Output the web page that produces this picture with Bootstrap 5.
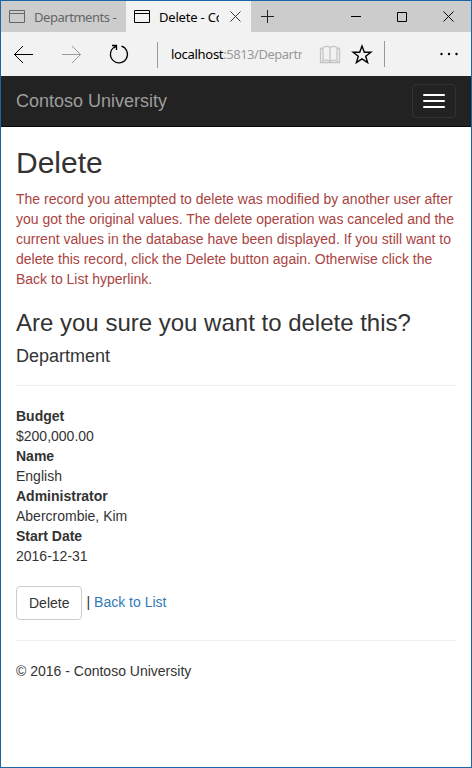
<!DOCTYPE html>
<html lang="en">
<head>
<meta charset="utf-8">
<meta name="viewport" content="width=device-width, initial-scale=1">
<title>Delete - Contoso University</title>
<link href="https://cdn.jsdelivr.net/npm/bootstrap@5.3.0/dist/css/bootstrap.min.css" rel="stylesheet">
<style>
body{font:14px/20px "Liberation Sans",Arial,sans-serif;color:#333;background:#fff}
.window{height:768px;border:1px solid #1b66a2}
.window svg{display:block;flex:none;fill:none;stroke:#000}
.chrome{font-family:"Noto Sans","Open Sans",sans-serif;color:#000}
.tabs-row{height:31px;background:#ccc;font-size:13px}
.tab-idle{width:125px;padding-left:8px;color:#666}
.tab-live{width:125px;padding-left:8px;background:#f2f2f2}
.tab-idle span{margin-left:9px;letter-spacing:-.46px}
.tab-live span{width:60px;margin-left:9px;letter-spacing:-.2px}
.tab-live .tab-x{margin-left:11px}
.window .tab-idle svg{stroke:#666}
.tab-plus{margin-left:10px}
.win-min{margin-right:36px}
.win-max{margin-right:36px}
.win-close{margin-right:17px}
.address-row{height:44px;background:#f2f2f2;font-size:13px}
.divider{width:1px;height:26px;background:#999;margin-top:1px}
.url{width:132px;margin-left:13px;color:#999;letter-spacing:-.48px}
.url b{font-weight:400;color:#000;letter-spacing:-.3px}
.site-nav{height:51px;background:#222;border-bottom:1px solid #080808;padding:0 15px}
.site-nav .navbar-brand{font-size:18px;line-height:20px;color:#9d9d9d;padding:0}
.site-nav .navbar-toggler{width:44px;height:34px;border:1px solid #333;border-radius:4px;padding:0 10px;gap:4px}
.bar{display:block;width:22px;height:2px;border-radius:1px;background:#fff}
.page{padding:19px 15px 0}
h2{font-size:30px;line-height:33px;margin:0 0 10px}
h3{font-size:24px;line-height:27px;margin:20px 0 10px}
h4{font-size:18px;line-height:20px;margin:0 0 -1px}
h2,h3,h4{font-weight:400}
.warn{color:#a94442;margin:0}
hr{margin:20px 0;border-color:#eee;opacity:1}
dl{margin:0 0 20px}
dd{margin:0}
dt,dd{line-height:20px}
.btn-plain{height:34px;border:1px solid #ccc;border-radius:4px;background:#fff;color:#333;font-size:14px;line-height:20px;padding:6px 12px}
.back{color:#337ab7;text-decoration:none}
.sep{margin:0 4px}
.actions span,.actions a{margin-top:-2px}
</style>
<script src="https://cdn.jsdelivr.net/npm/bootstrap@5.3.0/dist/js/bootstrap.bundle.min.js"></script>
</head>
<body>
<div class="window overflow-hidden">
  <div class="chrome">
    <div class="tabs-row d-flex align-items-center">
      <div class="tab-idle h-100 d-flex align-items-center">
        <svg width="16" height="13"><path d="M.5.5h15v12H.5zM.5 3.5h15"/></svg>
        <span class="text-nowrap">Departments -</span>
      </div>
      <div class="tab-live h-100 d-flex align-items-center">
        <svg width="16" height="13"><path d="M.5.5h15v12H.5zM.5 3.5h15"/></svg>
        <span class="text-nowrap overflow-hidden">Delete - Co</span>
        <svg class="tab-x" width="11" height="11"><path stroke="#333" d="M.5.5l10 10M10.500.5l-10 10"/></svg>
      </div>
      <svg class="tab-plus" width="13" height="13"><path stroke="#222" d="M6.500 0v13M0 6.500h13"/></svg>
      <svg class="win-min ms-auto" width="10" height="11"><path d="M0 5.500h10"/></svg>
      <svg class="win-max" width="10" height="10"><path d="M.5.5h9v9h-9z"/></svg>
      <svg class="win-close" width="11" height="11"><path d="M.5.5l10 10M10.500.5l-10 10"/></svg>
    </div>
    <div class="address-row d-flex align-items-center">
      <svg width="156" height="44"><path d="M13 22.500h19M22 14l-8.500 8.500L22 31"/><path stroke="#999" d="M61 22.500h19M71 14l8.500 8.500L71 31"/><path stroke-width="1.300" d="M120.500 14.200a8.500 8.500 0 1 1-6.500.6"/><path d="M111 13.500h4.500V18M115.500 13.500l-2.500 2.500" stroke-width="1.300"/></svg>
      <div class="divider"></div>
      <div class="url text-nowrap overflow-hidden"><b>localhost</b>:5813/Departr</div>
      <svg width="169" height="44"><g stroke="#c4c4c4" stroke-width="1.300"><path d="M28 15.500c-2-1.300-5-1.300-7 0v13.500c2-1 5-1 7 .5 2-1.500 5-1.500 7-.5v-13.500c-2-1.300-5-1.300-7 0zM28 15.500V30M21 16.500h-2.500v14h19v-14H35"/></g><path stroke-width="1.400" d="M60 14l2.300 6.200h6.600l-5.200 4.100 1.900 6.300-5.600-3.700-5.600 3.700 1.900-6.300-5.200-4.100h6.600z"/><path stroke="#999" d="M82.500 9v26"/><g fill="#000" stroke="none"><circle cx="139.500" cy="22" r="1.200"/><circle cx="147" cy="22" r="1.200"/><circle cx="154.500" cy="22" r="1.200"/></g></svg>
    </div>
  </div>
  <nav class="site-nav navbar d-flex align-items-center">
    <a class="navbar-brand" href="#">Contoso University</a>
    <button class="navbar-toggler d-flex flex-column justify-content-center" type="button" aria-label="Toggle navigation"><span class="bar"></span><span class="bar"></span><span class="bar"></span></button>
  </nav>
  <main class="page">
    <h2>Delete</h2>
    <p class="warn">The record you attempted to delete was modified by another user after you got the original values. The delete operation was canceled and the current values in the database have been displayed. If you still want to delete this record, click the Delete button again. Otherwise click the Back to List hyperlink.</p>
    <h3>Are you sure you want to delete this?</h3>
    <h4>Department</h4>
    <hr>
    <dl>
      <dt>Budget</dt><dd>$200,000.00</dd>
      <dt>Name</dt><dd>English</dd>
      <dt>Administrator</dt><dd>Abercrombie, Kim</dd>
      <dt>Start Date</dt><dd>2016-12-31</dd>
    </dl>
    <div class="actions d-flex align-items-center">
      <button class="btn btn-plain" type="button">Delete</button>
      <span class="sep">|</span><a class="back" href="#">Back to List</a>
    </div>
    <hr>
    <footer>© 2016 - Contoso University</footer>
  </main>
</div>
</body>
</html>
